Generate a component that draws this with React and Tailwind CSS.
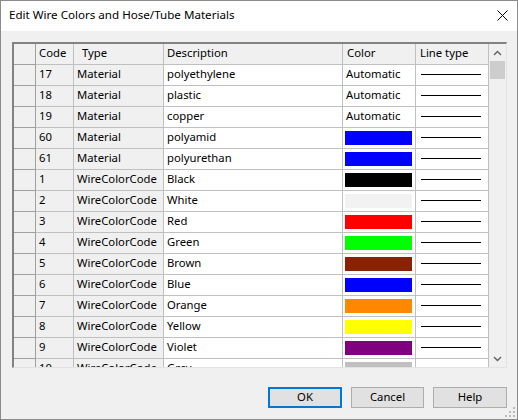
import React from "react";

const rows = [
  { code: "17", type: "Material", desc: "polyethylene", auto: true },
  { code: "18", type: "Material", desc: "plastic", auto: true },
  { code: "19", type: "Material", desc: "copper", auto: true },
  { code: "60", type: "Material", desc: "polyamid", color: "#0000ff" },
  { code: "61", type: "Material", desc: "polyurethan", color: "#0000ff" },
  { code: "1", type: "WireColorCode", desc: "Black", color: "#000000" },
  { code: "2", type: "WireColorCode", desc: "White", color: "#f2f2f2" },
  { code: "3", type: "WireColorCode", desc: "Red", color: "#ff0000" },
  { code: "4", type: "WireColorCode", desc: "Green", color: "#00ff00" },
  { code: "5", type: "WireColorCode", desc: "Brown", color: "#882200" },
  { code: "6", type: "WireColorCode", desc: "Blue", color: "#0000ff" },
  { code: "7", type: "WireColorCode", desc: "Orange", color: "#ff8800" },
  { code: "8", type: "WireColorCode", desc: "Yellow", color: "#ffff00" },
  { code: "9", type: "WireColorCode", desc: "Violet", color: "#800080" },
  { code: "10", type: "WireColorCode", desc: "Grey", color: "#c0c0c0" },
];

function Row({ r }) {
  return (
    <div className="flex h-[21px] shrink-0">
      <div className="w-[22px] h-full bg-[#f0f0f0] border-r border-b border-[#a0a0a0]" />
      <div className="w-[38px] h-full bg-[#f0f0f0] border-r border-b border-[#c0c0c0] pl-[3px] pb-[3px] flex items-center">
        {r.code}
      </div>
      <div className="w-[90px] h-full bg-[#f0f0f0] border-r border-b border-[#c0c0c0] pl-[3px] pb-[3px] flex items-center whitespace-nowrap">
        {r.type}
      </div>
      <div className="w-[179px] h-full bg-white border-r border-b border-[#c0c0c0] pl-[3px] pb-[3px] flex items-center">
        {r.desc}
      </div>
      <div className="w-[73px] h-full bg-white border-r border-b border-[#c0c0c0] pl-[2px] pr-[3px] pt-[3px]">
        {r.auto ? (
          <div className="pl-[1px] -mt-[3px] h-[20px] pb-[3px] flex items-center">Automatic</div>
        ) : (
          <div className="h-[14px] w-full" style={{ backgroundColor: r.color }} />
        )}
      </div>
      <div className="w-[73px] h-full bg-white border-r border-b border-[#c0c0c0] pl-[5px] pr-[7px] pt-[9px]">
        <div className="h-[1px] w-full bg-black" />
      </div>
    </div>
  );
}

function Chevron({ up }) {
  return (
    <svg width="9" height="6" viewBox="0 0 9 6">
      <polyline
        points={up ? "1,5 4.5,1.5 8,5" : "1,1 4.5,4.5 8,1"}
        fill="none"
        stroke="#606060"
        strokeWidth="1.4"
      />
    </svg>
  );
}

export default function App() {
  return (
    <div
      className="relative w-[518px] h-[420px] border border-[#8c8c8c] bg-[#f0f0f0] flex flex-col text-[11.3px] text-black leading-none"
      style={{ fontFamily: '"Noto Sans", "Open Sans", sans-serif' }}
    >
      <div className="h-[30px] bg-white flex items-center justify-between pl-[8px] pr-[9px] pb-[1px] shrink-0">
        <span className="text-[11.6px] pb-[1px]">Edit Wire Colors and Hose/Tube Materials</span>
        <svg width="11" height="11" viewBox="0 0 11 11">
          <path d="M0.5 0.5 L10.5 10.5 M10.5 0.5 L0.5 10.5" stroke="#000" strokeWidth="1" />
        </svg>
      </div>

      <div className="ml-[11px] mt-[11px] w-[495px] h-[326px] border-l-2 border-t-2 border-r border-b border-l-[#828282] border-t-[#828282] border-r-[#e3e3e3] border-b-[#e3e3e3] bg-white flex overflow-hidden">
        <div className="w-[475px] flex flex-col overflow-hidden">
          <div className="flex h-[21px] shrink-0 bg-[#f0f0f0]">
            <div className="w-[22px] h-full border-r border-b border-[#a0a0a0]" />
            <div className="w-[38px] h-full border-r border-b border-[#c0c0c0] pl-[3px] pb-[3px] flex items-center">Code</div>
            <div className="w-[90px] h-full border-r border-b border-[#c0c0c0] pl-[8px] pb-[3px] flex items-center">Type</div>
            <div className="w-[179px] h-full border-r border-b border-[#c0c0c0] pl-[3px] pb-[3px] flex items-center">Description</div>
            <div className="w-[73px] h-full border-r border-b border-[#c0c0c0] pl-[4px] pb-[3px] flex items-center">Color</div>
            <div className="w-[73px] h-full border-r border-b border-[#c0c0c0] pl-[4px] pb-[3px] flex items-center">Line type</div>
          </div>
          {rows.map((r) => (
            <Row key={r.code} r={r} />
          ))}
        </div>
        <div className="w-[17px] h-full bg-[#f0f0f0] flex flex-col">
          <div className="h-[17px] flex items-center justify-center">
            <Chevron up />
          </div>
          <div className="mx-[1px] h-[18px] bg-[#cdcdcd]" />
          <div className="flex-1" />
          <div className="h-[17px] flex items-center justify-center">
            <Chevron />
          </div>
        </div>
      </div>

      <div className="mt-[19px] flex justify-end pr-[10px] gap-[9px]">
        <button className="w-[74px] h-[21px] bg-[#e1e1e1] border-2 border-[#0078d7] pb-[2px] flex items-center justify-center">
          OK
        </button>
        <button className="w-[73px] h-[21px] bg-[#e1e1e1] border border-[#adadad] pb-[2px] flex items-center justify-center">
          Cancel
        </button>
        <button className="w-[74px] h-[21px] bg-[#e1e1e1] border border-[#adadad] pb-[2px] flex items-center justify-center">
          Help
        </button>
      </div>

      <svg className="absolute right-[1px] bottom-[1px]" width="12" height="12" viewBox="0 0 12 12">
        <g fill="#bcbcbc">
          <rect x="9" y="1" width="2" height="2" />
          <rect x="5" y="5" width="2" height="2" />
          <rect x="9" y="5" width="2" height="2" />
          <rect x="1" y="9" width="2" height="2" />
          <rect x="5" y="9" width="2" height="2" />
          <rect x="9" y="9" width="2" height="2" />
        </g>
      </svg>
    </div>
  );
}
